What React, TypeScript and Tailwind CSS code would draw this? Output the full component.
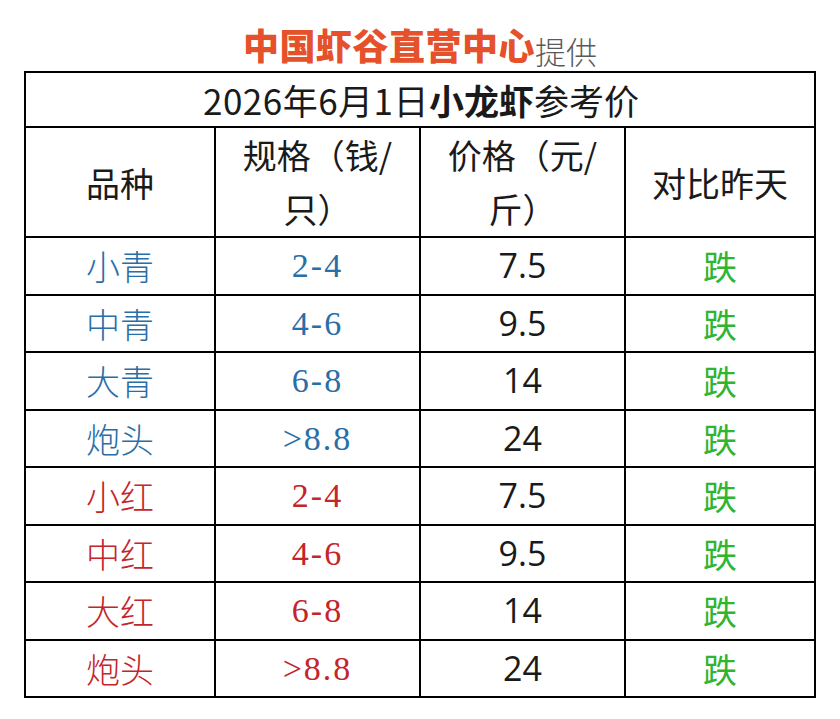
const sans = '[font-family:"Noto_Sans_CJK_SC","Noto_Sans",sans-serif]'

type Row = { name: string; spec: string; price: string; tone: 'blue' | 'red' }

const rows: Row[] = [
  { name: '小青', spec: '2-4', price: '7.5', tone: 'blue' },
  { name: '中青', spec: '4-6', price: '9.5', tone: 'blue' },
  { name: '大青', spec: '6-8', price: '14', tone: 'blue' },
  { name: '炮头', spec: '>8.8', price: '24', tone: 'blue' },
  { name: '小红', spec: '2-4', price: '7.5', tone: 'red' },
  { name: '中红', spec: '4-6', price: '9.5', tone: 'red' },
  { name: '大红', spec: '6-8', price: '14', tone: 'red' },
  { name: '炮头', spec: '>8.8', price: '24', tone: 'red' },
]

const cell = 'flex items-center justify-center border-r-2 border-b-2 border-black text-center'

export default function App() {
  return (
    <div className={`w-[840px] h-[719px] bg-white ${sans}`}>
      {/* 标题 */}
      <div className="h-[71px] flex items-start justify-center pt-[24px]">
        <span className="text-[36px] leading-[40px] font-black text-[#e5512b] tracking-[0.5px]">中国虾谷直营中心</span>
        <span className="text-[31px] leading-[40px] text-[#5a5a5a] font-light self-end">提供</span>
      </div>

      <div className="ml-[24px] w-[792px] border-l-2 border-t-2 border-black grid grid-cols-[190px_205px_205px_190px] grid-rows-[55px_110px_repeat(8,57.5px)] text-[#1a1a1a]">
        <div className={`${cell} col-span-4 text-[35px] pt-[2px] pl-[2px]`}>
          <span className="tracking-[0.5px]">2026年6月1日</span>
          <span className="font-bold">小龙虾</span>
          <span>参考价</span>
        </div>

        {/* 表头 */}
        <div className={`${cell} text-[34px]`}>品种</div>
        <div className={`${cell} text-[34px] leading-[54px] px-[18px]`}>规格（钱/只）</div>
        <div className={`${cell} text-[34px] leading-[54px] px-[18px]`}>价格（元/斤）</div>
        <div className={`${cell} text-[34px]`}>对比昨天</div>

        {rows.map((r, i) => {
          const color = r.tone === 'blue' ? 'text-[#2a6ea8]' : 'text-[#c4252b]'
          return (
            <div key={i} className="contents">
              <div className={`${cell} ${color} text-[34px] font-light`}>{r.name}</div>
              <div className={`${cell} ${color} text-[34px] [font-family:"Liberation_Serif",serif] tracking-[2px]`}>{r.spec}</div>
              <div className={`${cell} text-[34px] text-[#1a1a1a] [font-family:"Open_Sans","Noto_Sans",sans-serif]`}>{r.price}</div>
              <div className={`${cell} text-[34px] text-[#2fb52f]`}>跌</div>
            </div>
          )
        })}
      </div>
    </div>
  )
}
